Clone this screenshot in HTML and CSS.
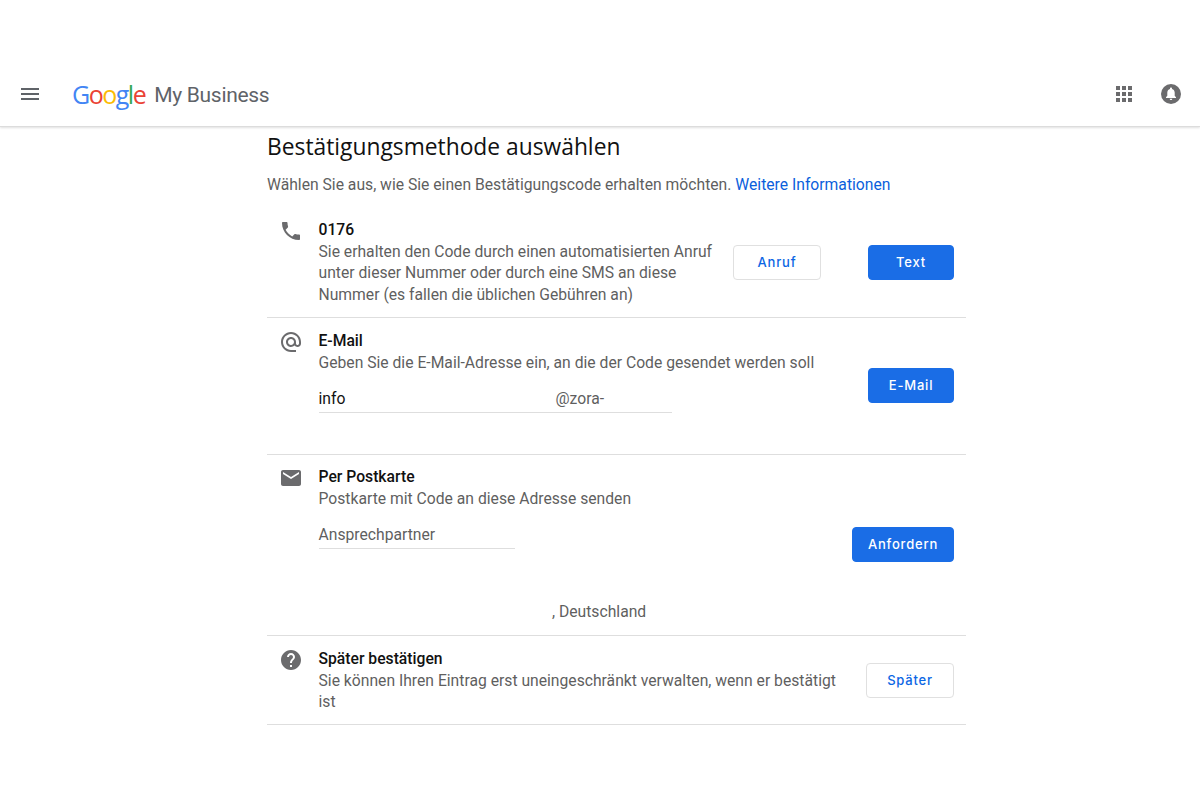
FILE: index.html
```
<!DOCTYPE html>
<html lang="de">
<head>
<meta charset="utf-8">
<title>Google My Business</title>
<link rel="stylesheet" href="styles.css">
</head>
<body>
<header class="topbar">
  <svg class="menu-icon" viewBox="0 0 24 24" width="24" height="24"><path d="M3 18h18v-2H3v2zm0-5h18v-2H3v2zm0-7v2h18V6H3z"/></svg>
  <div class="logo"><span class="g-blue">G</span><span class="g-red">o</span><span class="g-yellow">o</span><span class="g-blue">g</span><span class="g-green">l</span><span class="g-red">e</span></div>
  <div class="product">My Business</div>
  <div class="top-actions">
    <svg class="apps-icon" viewBox="0 0 24 24" width="24" height="24"><path d="M4 8h4V4H4v4zm6 12h4v-4h-4v4zm-6 0h4v-4H4v4zm0-6h4v-4H4v4zm6 0h4v-4h-4v4zm6-10v4h4V4h-4zm-6 4h4V4h-4v4zm6 6h4v-4h-4v4zm0 6h4v-4h-4v4z"/></svg>
    <svg class="bell-icon" viewBox="0 0 20 20" width="20" height="20"><circle cx="10" cy="10" r="10" fill="#6b6b6d"/><path fill="#fff" d="M10 3.600c-.6 0-1 .4-1 1v.3C7.300 5.400 6.300 6.800 6.300 8.600v3.200L5 13.200v.7h10v-.7l-1.300-1.400V8.600c0-1.800-1-3.200-2.700-3.700v-.3c0-.6-.4-1-1-1zM8.700 14.700c0 .7.600 1.300 1.300 1.300s1.300-.6 1.300-1.300z"/></svg>
  </div>
</header>
<main class="page">
  <h1 class="title">Bestätigungsmethode auswählen</h1>
  <p class="intro">Wählen Sie aus, wie Sie einen Bestätigungscode erhalten möchten. <a class="link" href="#">Weitere Informationen</a></p>

  <section class="row row-phone">
    <svg class="icon" viewBox="0 0 24 24" width="24" height="24"><path d="M6.620 10.790c1.440 2.830 3.760 5.140 6.590 6.590l2.200-2.200c.27-.27.67-.36 1.020-.24 1.120.37 2.330.57 3.570.57.55 0 1 .45 1 1V20c0 .55-.45 1-1 1-9.390 0-17-7.610-17-17 0-.55.45-1 1-1h3.500c.55 0 1 .45 1 1 0 1.250.2 2.450.57 3.570.11.35.03.74-.25 1.020l-2.200 2.200z"/></svg>
    <div class="body body-phone">
      <h2 class="name">0176</h2>
      <p class="desc">Sie erhalten den Code durch einen automatisierten Anruf unter dieser Nummer oder durch eine SMS an diese Nummer (es fallen die üblichen Gebühren an)</p>
    </div>
    <div class="actions actions-phone">
      <button class="btn btn-outline btn-anruf">Anruf</button>
      <button class="btn btn-primary btn-text">Text</button>
    </div>
  </section>

  <section class="row row-mail">
    <svg class="icon" viewBox="0 0 24 24" width="24" height="24"><path d="M12 2C6.480 2 2 6.480 2 12s4.480 10 10 10h5v-2h-5c-4.340 0-8-3.660-8-8s3.660-8 8-8 8 3.660 8 8v1.430c0 .79-.71 1.570-1.500 1.570s-1.500-.78-1.500-1.570V12c0-2.760-2.240-5-5-5s-5 2.240-5 5 2.240 5 5 5c1.380 0 2.640-.56 3.540-1.470.65.89 1.770 1.470 2.960 1.470 1.970 0 3.500-1.600 3.500-3.570V12c0-5.520-4.480-10-10-10zm0 13c-1.660 0-3-1.340-3-3s1.340-3 3-3 3 1.340 3 3-1.340 3-3 3z"/></svg>
    <div class="body">
      <h2 class="name">E-Mail</h2>
      <p class="desc">Geben Sie die E-Mail-Adresse ein, an die der Code gesendet werden soll</p>
      <div class="field field-mail">
        <span class="field-user">info</span>
        <span class="field-domain">@zora-</span>
      </div>
    </div>
    <div class="actions actions-mail">
      <button class="btn btn-primary btn-text">E-Mail</button>
    </div>
  </section>

  <section class="row row-post">
    <svg class="icon" viewBox="0 0 24 24" width="24" height="24"><path d="M20 4H4c-1.100 0-1.990.9-1.990 2L2 18c0 1.100.9 2 2 2h16c1.100 0 2-.9 2-2V6c0-1.100-.9-2-2-2zm0 4l-8 5-8-5V6l8 5 8-5v2z"/></svg>
    <div class="body">
      <h2 class="name">Per Postkarte</h2>
      <p class="desc">Postkarte mit Code an diese Adresse senden</p>
      <div class="field field-post">Ansprechpartner</div>
      <p class="address">, Deutschland</p>
    </div>
    <div class="actions actions-post">
      <button class="btn btn-primary btn-request">Anfordern</button>
    </div>
  </section>

  <section class="row row-later">
    <svg class="icon" viewBox="0 0 24 24" width="24" height="24"><path d="M12 2C6.480 2 2 6.480 2 12s4.480 10 10 10 10-4.480 10-10S17.520 2 12 2zm1 17h-2v-2h2v2zm2.070-7.750l-.9.92C13.450 12.900 13 13.500 13 15h-2v-.5c0-1.100.45-2.100 1.170-2.830l1.240-1.260c.37-.36.59-.86.59-1.410 0-1.100-.9-2-2-2s-2 .9-2 2H8c0-2.210 1.790-4 4-4s4 1.790 4 4c0 .88-.36 1.680-.93 2.250z"/></svg>
    <div class="body body-later">
      <h2 class="name">Später bestätigen</h2>
      <p class="desc">Sie können Ihren Eintrag erst uneingeschränkt verwalten, wenn er bestätigt ist</p>
    </div>
    <div class="actions actions-later">
      <button class="btn btn-outline btn-later">Später</button>
    </div>
  </section>
</main>
</body>
</html>
```
FILE: styles.css
```
* { box-sizing: border-box; }
html, body { margin: 0; padding: 0; background: #fff; }
body { font-family: Roboto, "Liberation Sans", sans-serif; color: #5f5f5f; height: 800px; overflow: hidden; }
h1, h2, p { margin: 0; font-weight: 400; }

.topbar {
  display: flex;
  align-items: center;
  height: 127px;
  padding: 62px 19px 0 18px;
  border-bottom: 1px solid #dcdcdc;
  box-shadow: 0 1px 2px rgba(0,0,0,.12);
}
.menu-icon { fill: #5f6368; }
.logo { margin-left: 30px; font-family: "Open Sans", sans-serif; font-size: 25px; font-weight: 500; letter-spacing: -1.500px; line-height: 32px; }
.g-blue { color: #4285f4; }
.g-red { color: #ea4335; }
.g-yellow { color: #fbbc05; }
.g-green { color: #34a853; }
.product { margin-left: 9px; margin-top: 2px; font-size: 21px; letter-spacing: -.3px; color: #5f6368; line-height: 32px; }
.top-actions { margin-left: auto; display: flex; align-items: center; gap: 25px; }
.apps-icon { fill: #6b6b6d; }

.page { width: 699px; margin-left: 267px; }
.title { font-family: "Open Sans", sans-serif; font-size: 22.800px; line-height: 32px; color: #111; margin-top: 4px; }
.intro { font-size: 15.700px; line-height: 22px; margin-top: 11px; height: 44px; }
.link { color: #0b5fdc; text-decoration: none; }

.row { display: flex; padding: 0 12px; border-bottom: 1px solid #dedede; }
.icon { flex: none; fill: #6b6b6d; margin-right: 15.500px; }
.body { flex: 1; min-width: 0; }
.name { font-size: 15.700px; line-height: 21.500px; font-weight: 500; color: #111; }
.desc { font-size: 15.700px; line-height: 21.500px; color: #5f5f5f; }

.row-phone { height: 100px; padding-top: 1px; }
.row-mail { height: 137px; padding-top: 12px; }
.row-post { height: 181px; padding-top: 11px; }
.row-later { height: 89px; padding-top: 12px; }

.body-phone { max-width: 402px; }
.body-later { max-width: 524px; }

.field { font-size: 15.700px; line-height: 24px; border-bottom: 1px solid #dedede; margin-top: 14px; height: 26px; }
.field-mail { display: flex; width: 353px; color: #111; }
.field-user { width: 237px; }
.field-domain { color: #5f5f5f; }
.field-post { width: 196px; }
.address { font-size: 15.700px; line-height: 22px; margin-top: 52px; padding-left: 233.500px; }

.actions { display: flex; margin-left: auto; flex: none; }
.actions-phone { margin-top: 26px; gap: 47px; }
.actions-mail { margin-top: 38px; }
.actions-post { margin-top: 61px; }
.actions-later { margin-top: 15px; }

.btn { font-family: Inter, Roboto, sans-serif; font-size: 13px; font-weight: 500; letter-spacing: .8px; height: 35px; border-radius: 4px; padding: 0 0 2px; cursor: pointer; }
.btn-primary { background: #1a6de6; color: #fff; border: 1px solid #1a6de6; }
.btn-outline { background: #fff; color: #0b66e4; border: 1px solid #e0e0e0; }
.btn-anruf { width: 88px; }
.btn-text { width: 86px; }
.btn-request { width: 102px; }
.btn-later { width: 88px; }
```
